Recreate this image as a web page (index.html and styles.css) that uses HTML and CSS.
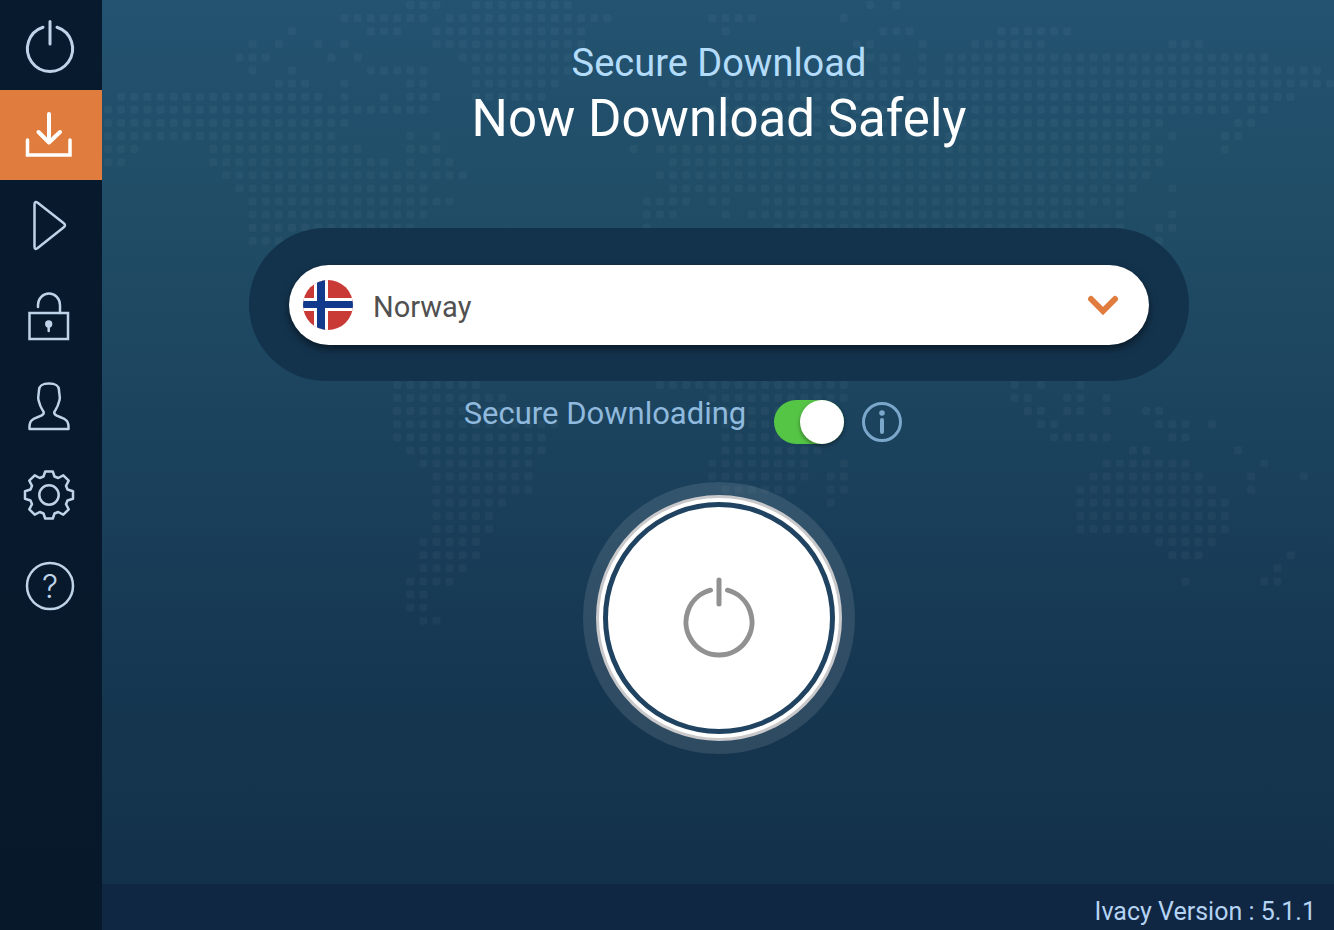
FILE: index.html
```html
<!DOCTYPE html>
<html lang="en">
<head>
  <meta charset="utf-8">
  <title>Ivacy</title>
  <link rel="stylesheet" href="styles.css">
</head>
<body>
  <div class="app">
    <nav class="sidebar">
      <a href="#connect" aria-label="Connect">
        <svg viewBox="0 0 102 90"><path d="M57 27.3A22.6 22.6 0 1 1 43 27.3M50 21.500V44" stroke-width="3"/></svg>
      </a>
      <a href="#download" class="active" aria-label="Secure download">
        <svg viewBox="0 0 102 90"><path d="M49 24V52M38.500 42L49 52.500L60 42" stroke-width="4"/><path d="M27.500 50V65H70V50" stroke-width="3.500" stroke-linejoin="miter"/></svg>
      </a>
      <a href="#streaming" aria-label="Streaming">
        <svg viewBox="0 0 102 90"><path d="M34.500 24.500Q34.500 20.500 38 23L63.500 43Q66.500 45.200 63.500 47.500L38 67.800Q34.500 70.500 34.500 66.500Z"/></svg>
      </a>
      <a href="#unblock" aria-label="Unblocking">
        <svg viewBox="0 0 102 90"><path d="M29.500 43H68V69H29.500Z" stroke-linejoin="miter"/><path d="M38 37V35A11 11.500 0 0 1 60 35V43"/><circle cx="48.700" cy="54" r="2.400" class="solid"/><path d="M48.700 55V61"/></svg>
      </a>
      <a href="#account" aria-label="Account">
        <svg viewBox="0 0 102 90"><path d="M29.500 69C29 61 32 59 38 57C44 55 45 53 42.500 50C40 46.500 39.500 44 38.500 40C37.500 37 39 34 39 30C39.500 25.500 42 23.500 49 23.500C56 23.500 58.500 25.500 59 30C59 34 60.500 37 59.500 40C58.500 44 58 46.500 55.500 50C53 53 54 55 60 57C66 59 69 61 68.500 69Z"/></svg>
      </a>
      <a href="#settings" aria-label="Settings">
        <svg viewBox="0 0 102 90"><path d="M43.500 26.500L45.200 21.500H52.800L54.500 26.500L58.200 28L63.300 25.300L68.700 30.700L66 35.800L67.500 39.500L73 41.200V48.800L67.500 50.500L66 54.200L68.700 59.300L63.300 64.700L58.200 62L54.500 63.500L52.800 68.500H45.200L43.500 63.500L39.800 62L34.700 64.700L29.300 59.300L32 54.200L30.500 50.500L25 48.800V41.200L30.500 39.500L32 35.800L29.300 30.700L34.700 25.300L39.800 28Z"/><circle cx="49" cy="45" r="9.700"/></svg>
      </a>
      <a href="#help" aria-label="Help">
        <svg viewBox="0 0 102 90"><circle cx="50" cy="46" r="23"/><text x="50" y="58" text-anchor="middle">?</text></svg>
      </a>
    </nav>

    <main class="main">
      <svg class="map" id="map" viewBox="0 0 1232 930" preserveAspectRatio="xMinYMin slice" aria-hidden="true"></svg>

      <div class="content">
        <h2 class="subtitle">Secure Download</h2>
        <h1 class="title">Now Download Safely</h1>

        <div class="country-frame">
          <div class="country">
            <svg class="flag" viewBox="0 0 50 50" aria-hidden="true">
              <clipPath id="round"><circle cx="25" cy="25" r="25"/></clipPath>
              <g clip-path="url(#round)">
                <path fill="#c93a37" d="M0 0H50V50H0Z"/>
                <path fill="#fff" d="M11 0H25V50H11ZM0 18H50V31H0Z"/>
                <path fill="#123a8c" d="M14 0H22V50H14ZM0 21H50V28H0Z"/>
              </g>
            </svg>
            <select class="country-select" aria-label="Country">
              <option>Norway</option>
            </select>
            <svg class="chevron" viewBox="0 0 32 22" aria-hidden="true"><path d="M4 5L16 17L28 5"/></svg>
          </div>
        </div>

        <div class="option">
          <label for="secure">Secure Downloading</label>
          <input type="checkbox" id="secure" class="toggle" checked>
          <button type="button" class="info" aria-label="About secure downloading">
            <svg viewBox="0 0 40 40"><circle cx="20" cy="20" r="18.500"/><path d="M20 18V30" stroke-width="4"/><circle cx="20" cy="11" r="2.800" class="dot"/></svg>
          </button>
        </div>

        <button type="button" class="power" aria-label="Connect">
          <span class="power-ring">
            <svg viewBox="0 0 72 82"><path d="M44.500 13.200A33 33 0 1 1 27.500 13.200M36 3V27"/></svg>
          </span>
        </button>
      </div>

      <footer class="footer">Ivacy Version : 5.1.1</footer>
    </main>
  </div>

  <script src="map.js"></script>
</body>
</html>
```
FILE: styles.css
```css
* {
  box-sizing: border-box;
}

body {
  margin: 0;
  font-family: Roboto, "Open Sans", sans-serif;
}

.app {
  display: flex;
  min-height: 100vh;
}

.sidebar {
  flex: none;
  width: 102px;
  background: linear-gradient(#081a2d, #07182b);
}

.sidebar a {
  display: block;
  height: 90px;
  color: #bfd3e8;
}

.sidebar a.active {
  background: #e07c3e;
  color: #fff;
}

.sidebar svg {
  display: block;
  width: 102px;
  height: 90px;
  fill: none;
  stroke: currentColor;
  stroke-width: 2.5;
  stroke-linecap: round;
  stroke-linejoin: round;
}

.sidebar .solid {
  fill: currentColor;
}

.sidebar text {
  fill: currentColor;
  stroke: none;
  font-family: Inter, sans-serif;
  font-size: 32px;
  font-weight: 300;
}

.main {
  flex: 1;
  position: relative;
  display: flex;
  flex-direction: column;
  background: linear-gradient(#235371, #204b64 27%, #1b425d 48%, #163751 72%, #122f48);
}

/* world map behind the content */
.map {
  position: absolute;
  top: 0;
  left: 0;
  width: 100%;
  height: 100%;
  fill: #fff;
  fill-opacity: 0.035;
}

.content {
  position: relative;
  flex: 1;
  display: flex;
  flex-direction: column;
  align-items: center;
  padding: 39px 40px 0 42px;
}

.subtitle {
  margin: 0;
  font-size: 38px;
  font-weight: 400;
  line-height: 48px;
  color: #b3dcfa;
}

.title {
  margin: 0;
  font-size: 51px;
  font-weight: 400;
  line-height: 64px;
  color: #fff;
}

.country-frame {
  width: 100%;
  max-width: 940px;
  margin-top: 77px;
  padding: 37px 40px 36px;
  border-radius: 77px;
  background: #13334d;
}

.country {
  display: flex;
  align-items: center;
  height: 80px;
  padding: 0 30px 0 14px;
  border-radius: 40px;
  background: #fff;
  box-shadow: 0 4px 8px rgba(0, 0, 0, 0.5);
}

.flag {
  width: 50px;
  height: 50px;
}

.country-select {
  flex: 1;
  height: 80px;
  padding: 4px 0 0 20px;
  border: 0;
  appearance: none;
  background: none;
  font: 400 29px Roboto, sans-serif;
  color: #505050;
}

.chevron {
  width: 32px;
  height: 22px;
  fill: none;
  stroke: #e07c3e;
  stroke-width: 6;
  stroke-linecap: round;
}

.option {
  display: flex;
  align-items: flex-start;
  margin: 19px 72px 0 0;
  font-size: 31px;
  line-height: 28px;
  color: #8fb9dd;
}

.toggle {
  width: 70px;
  height: 44px;
  margin: 0 18px 0 28px;
  appearance: none;
  border-radius: 22px;
  background: #4a6478;
}

.toggle::before {
  content: "";
  display: block;
  width: 44px;
  height: 44px;
  border-radius: 50%;
  background: #fff;
  box-shadow: 0 2px 4px rgba(0, 0, 0, 0.4);
}

.toggle:checked {
  background: #55c546;
}

.toggle:checked::before {
  margin-left: auto;
}

.info {
  margin-top: 2px;
  padding: 0;
  border: 0;
  background: none;
}

.info svg {
  display: block;
  width: 40px;
  height: 40px;
  fill: none;
  stroke: #7ba7ca;
  stroke-width: 3;
  stroke-linecap: round;
}

.info .dot {
  fill: #7ba7ca;
  stroke: none;
}

.power {
  width: 246px;
  height: 246px;
  margin: 51px 0 40px;
  padding: 4px;
  border: 3px solid #c9c9cb;
  border-radius: 50%;
  background: #fff;
  box-shadow: 0 0 0 13px rgba(255, 255, 255, 0.11);
}

.power-ring {
  display: flex;
  align-items: center;
  justify-content: center;
  height: 100%;
  border: 5px solid #1f4360;
  border-radius: 50%;
}

.power svg {
  width: 72px;
  height: 82px;
  fill: none;
  stroke: #919191;
  stroke-width: 5;
  stroke-linecap: round;
}

.footer {
  position: relative;
  padding: 13px 18px 3px;
  background: #102743;
  font-size: 25px;
  line-height: 30px;
  text-align: right;
  color: #b5d3f2;
}
```
FILE: map.js
```javascript
// Dotted world map: one entry per row, "from-to" column runs
const rows = {
  0: "23-25 28-35 58 60",
  1: "18-24 26-38 46-49 56",
  2: "14 20-22 25-36 47 59-61 68-73",
  3: "11 13 16 18 25-36 57-58 62 66-71 81-83",
  4: "10-12 17 19 27-35 58-60 62 64-88",
  5: "11 14 20-24 28-35 59-60 62 64-92",
  6: "13-15 18 23-24 28-34 46-93",
  7: "1-16 18 21 23-25 28-33 47-90",
  8: "0-24 46-85 87-88",
  9: "0-18 46-80 86-87",
  10: "0-17 23 25 47-79 81 85-86",
  11: "0-2 8-19 23-25 40 42-80 85",
  12: "0-1 8-21 23 25-26 43-80",
  13: "9-27 42-79",
  14: "10-24 43-78 81",
  15: "11-26 41-44 46-47 50-77",
  16: "11-24 41-43 47 49-74 77 81",
  17: "11-23 41 51-77 80-81",
  18: "11-14 80",
  29: "22-28 42-56 69 71 74",
  30: "22-30 46-56 69-70 73-74 76",
  31: "22-33 46-55 70-71 73-74 76 79-80",
  32: "22-34 47-55 71-72 80-82 84",
  33: "22-33 47-55 72-76 81-82",
  34: "23-33 47-54 78-79 86",
  35: "24-32 46-53 56 76-82 88",
  36: "25-32 46-53 55-56 75-83 87 91",
  37: "25-32 47-52 55-56 74-84 87",
  38: "25-30 55 74-85",
  39: "25-29 74-85",
  40: "25-29 74-85",
  41: "24-28 80-84",
  42: "24-28 81-83 90",
  43: "24-27 89",
  44: "23-26 82 88-89",
  45: "23-24",
  46: "23-24",
  47: "24-25"
};

const map = document.getElementById("map");

for (const row in rows) {
  for (const run of rows[row].split(" ")) {
    const [from, to = from] = run.split("-").map(Number);
    for (let col = from; col <= to; col++) {
      const dot = document.createElementNS("http://www.w3.org/2000/svg", "rect");
      dot.setAttribute("x", 2 + col * 13.14);
      dot.setAttribute("y", 1 + row * 13.1);
      dot.setAttribute("width", 8);
      dot.setAttribute("height", 8);
      dot.setAttribute("rx", 2);
      map.appendChild(dot);
    }
  }
}
```
